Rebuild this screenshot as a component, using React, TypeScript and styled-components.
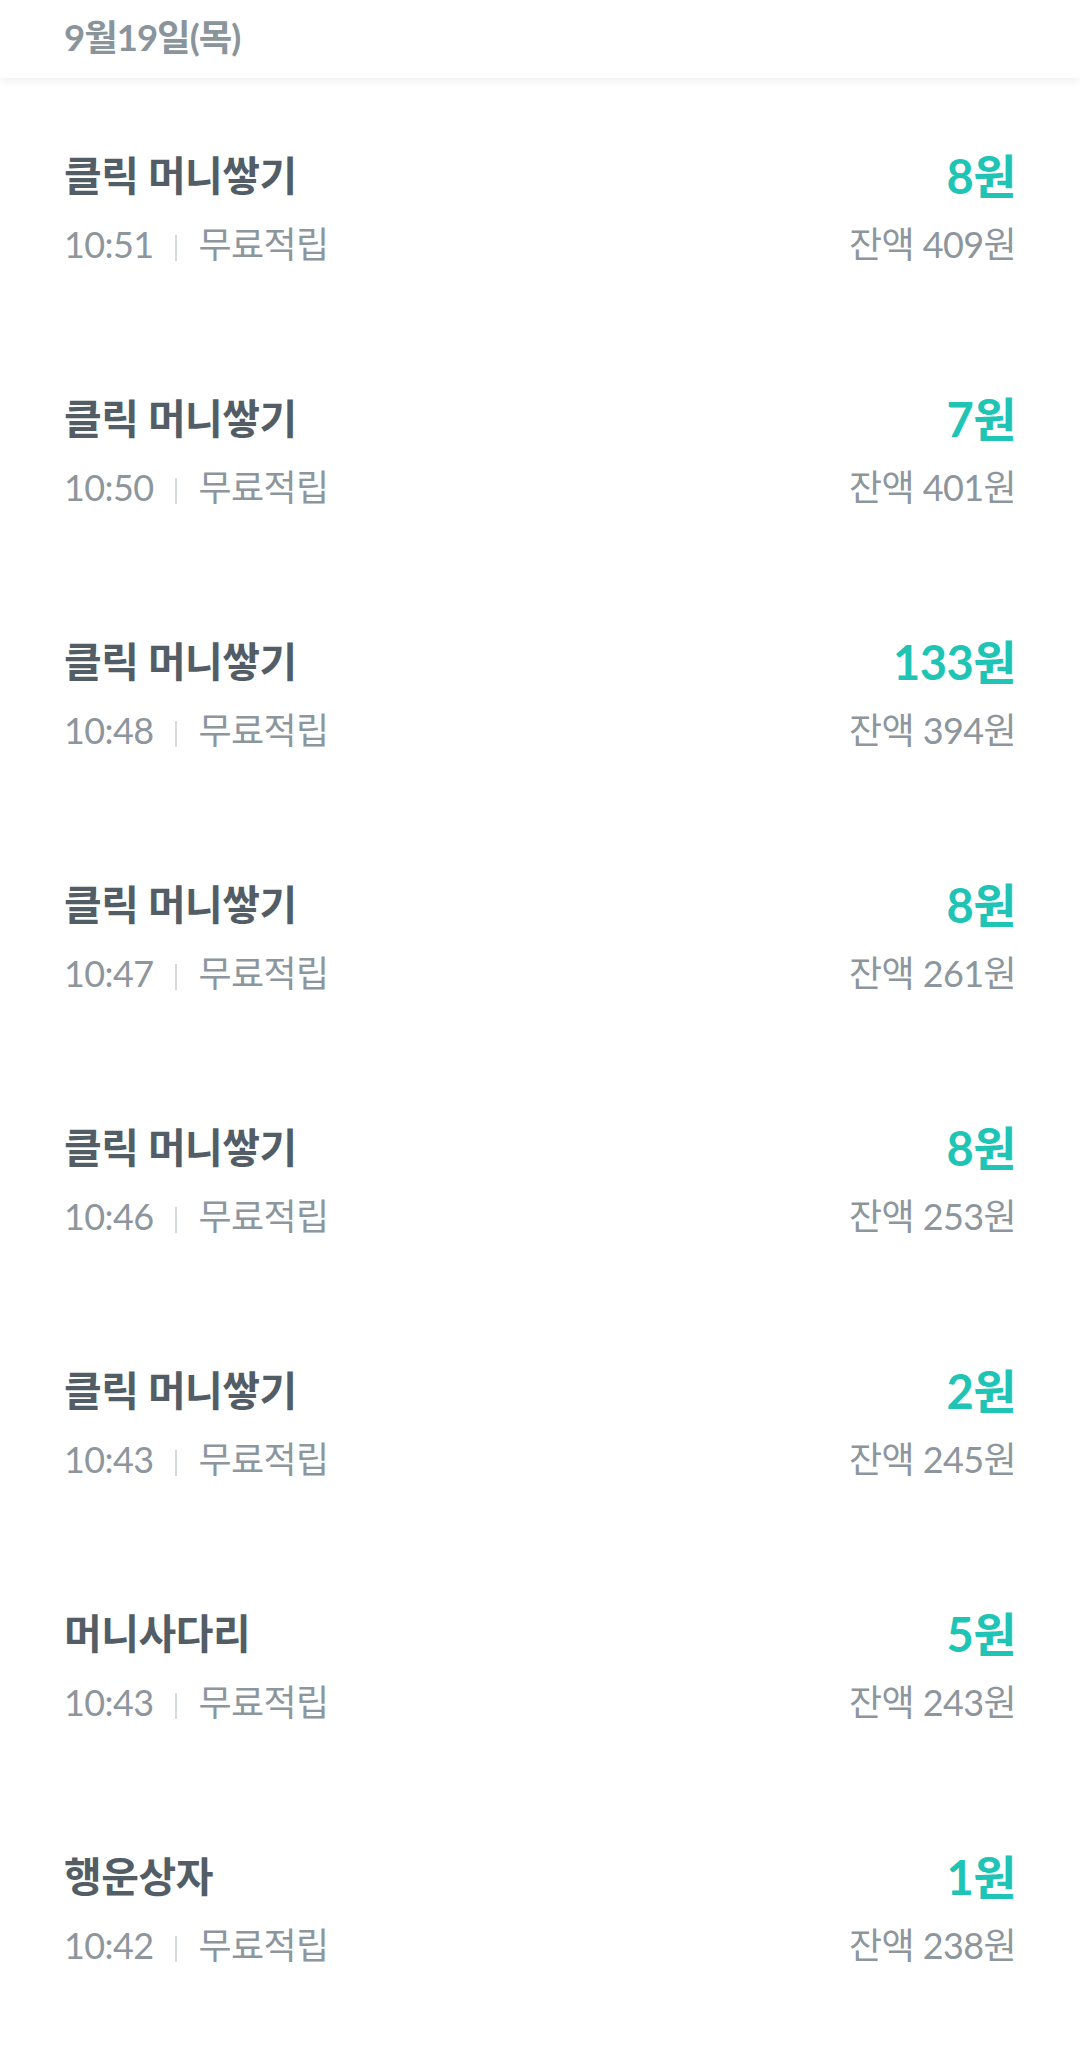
import React from "react";
import styled, { createGlobalStyle } from "styled-components";

interface Entry {
  title: string;
  time: string;
  amount: number;
  balance: number;
}

const entries: Entry[] = [
  { title: "클릭 머니쌓기", time: "10:51", amount: 8, balance: 409 },
  { title: "클릭 머니쌓기", time: "10:50", amount: 7, balance: 401 },
  { title: "클릭 머니쌓기", time: "10:48", amount: 133, balance: 394 },
  { title: "클릭 머니쌓기", time: "10:47", amount: 8, balance: 261 },
  { title: "클릭 머니쌓기", time: "10:46", amount: 8, balance: 253 },
  { title: "클릭 머니쌓기", time: "10:43", amount: 2, balance: 245 },
  { title: "머니사다리", time: "10:43", amount: 5, balance: 243 },
  { title: "행운상자", time: "10:42", amount: 1, balance: 238 },
];

const GlobalStyle = createGlobalStyle`
  body {
    margin: 0;
    background: #ffffff;
    font-family: "Lato", "Noto Sans CJK KR", sans-serif;
  }
`;

const App = () => {
  return (
    <>
      <GlobalStyle />
      <Page>
        <DateHeader>9월19일(목)</DateHeader>
        <List>
          {entries.map((e, i) => (
            <Row key={i}>
              <Left>
                <Title>{e.title}</Title>
                <Meta>
                  <span>{e.time}</span>
                  <Divider />
                  <span>무료적립</span>
                </Meta>
              </Left>
              <Right>
                <Amount>{e.amount}원</Amount>
                <Balance>잔액 {e.balance}원</Balance>
              </Right>
            </Row>
          ))}
        </List>
      </Page>
    </>
  );
};

export default App;

const Page = styled.div`
  width: 1080px;
  height: 2048px;
  overflow: hidden;
  background: #ffffff;
`;

const DateHeader = styled.div`
  position: relative;
  z-index: 1;
  height: 78px;
  padding: 0 64px 8px;
  display: flex;
  align-items: center;
  box-sizing: border-box;
  font-size: 36.5px;
  font-weight: 700;
  color: #8a949b;
  letter-spacing: -1px;
  background: #ffffff;
  box-shadow: 0 4px 8px rgba(0, 0, 0, 0.05);
`;

const List = styled.div`
  display: flex;
  flex-direction: column;
`;

const Row = styled.div`
  height: 243px;
  box-sizing: border-box;
  padding: 72px 64px 0 64px;
  display: flex;
  justify-content: space-between;
  align-items: flex-start;
`;

const Left = styled.div`
  display: flex;
  flex-direction: column;
`;

const Right = styled.div`
  display: flex;
  flex-direction: column;
  align-items: flex-end;
`;

const Title = styled.div`
  font-size: 41px;
  line-height: 52px;
  font-weight: 700;
  color: #535d66;
  letter-spacing: -0.5px;
`;

const Amount = styled.div`
  font-size: 47px;
  line-height: 52px;
  font-weight: 700;
  color: #20c4b4;
  letter-spacing: -0.5px;
`;

const Meta = styled.div`
  margin-top: 18px;
  display: flex;
  align-items: center;
  font-size: 36px;
  line-height: 48px;
  color: #8d969d;
  letter-spacing: -0.6px;
`;

const Divider = styled.span`
  display: inline-block;
  width: 2px;
  height: 26px;
  margin: 8px 22px 0 21px;
  background: #d6dadd;
`;

const Balance = styled.div`
  margin-top: 18px;
  font-size: 36px;
  line-height: 48px;
  color: #8d969d;
  letter-spacing: -0.6px;
`;
